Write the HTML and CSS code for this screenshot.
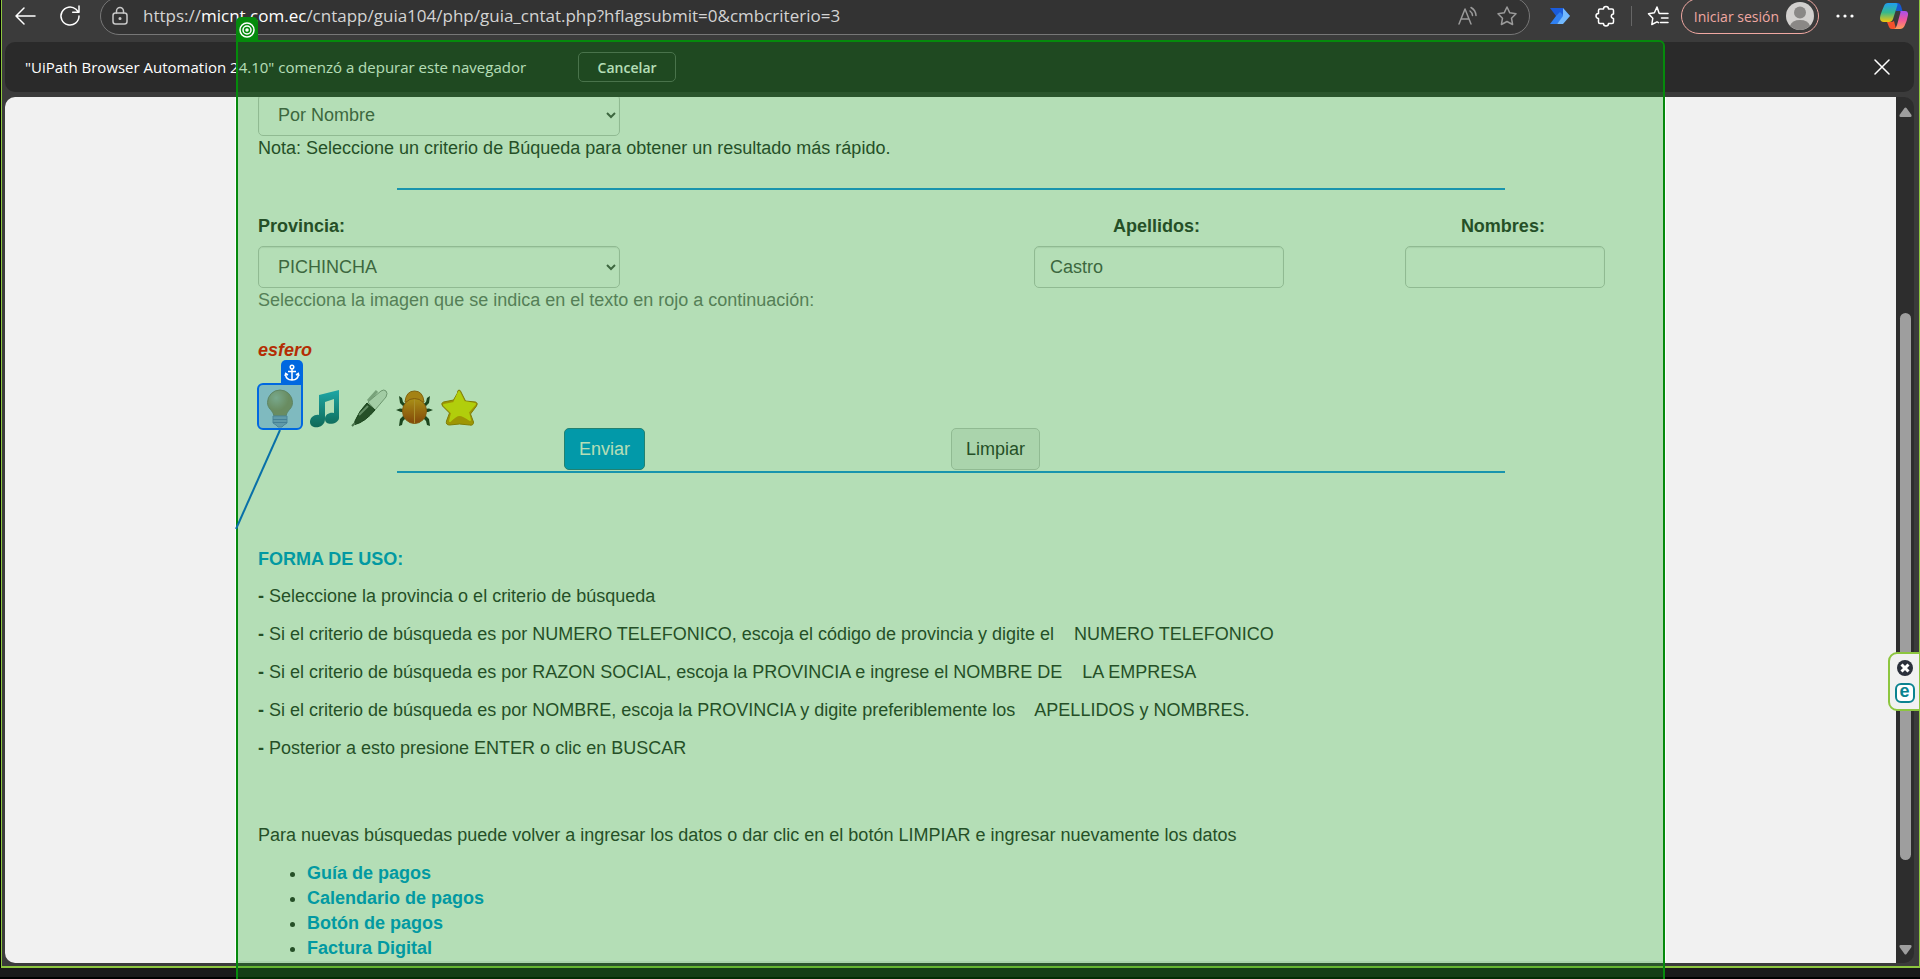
FILE: index.html
```html
<!DOCTYPE html>
<html lang="es">
<head>
<meta charset="utf-8">
<title>Guía telefónica</title>
<link rel="stylesheet" href="styles.css">
</head>
<body>
<div class="window">
  <header class="toolbar">
    <button class="icon-btn back" aria-label="Atrás"><svg width="22" height="22" viewBox="0 0 22 22"><path d="M21 11H2M10 3L2 11l8 8"/></svg></button>
    <button class="icon-btn reload" aria-label="Actualizar"><svg width="22" height="22" viewBox="0 0 22 22"><path d="M20 11a9 9 0 1 1-3-6.700L19.500 7M20 1v6.300h-6.300"/></svg></button>
    <div class="address">
      <svg class="dim" width="18" height="20" viewBox="0 0 18 20"><rect x="2" y="7" width="14" height="11" rx="2.500"/><path d="M5.500 7V5a3.500 3.500 0 0 1 7 0v2"/><circle cx="9" cy="12.500" r="0.800"/></svg>
      <span class="url">https://<b>micnt.com.ec</b>/cntapp/guia104/php/guia_cntat.php?hflagsubmit=0&amp;cmbcriterio=3</span>
      <svg class="faint" width="20" height="20" viewBox="0 0 20 20"><path d="M1 18L7 3l6 15M3 13h8M12 5a6 6 0 0 1 2.500 4.500M13 1.500a10 10 0 0 1 5 8"/></svg>
      <svg class="faint" width="22" height="22" viewBox="0 0 22 22"><path d="M11 2l2.800 5.800 6.200.9-4.500 4.500 1.100 6.300L11 16.500l-5.600 3 1.100-6.300L2 8.700l6.200-.9z"/></svg>
    </div>
    <svg class="plain" width="22" height="18" viewBox="0 0 22 18"><path fill="#1b5cdb" d="M1 1h13l7 8h-9L7 9z"/><path fill="#2f80f2" d="M7 9l4-4 4 4-7 8H1z"/><path fill="#72b9ff" d="M14 1l7 8-7 8H8l6-8z"/></svg>
    <svg class="puzzle" width="22" height="22" viewBox="0 0 22 22"><path d="M5 4h3.500a2.500 2.500 0 0 1 5 0H17q1.500 0 1.500 1.500V9a2.200 2.200 0 1 0 0 4.400V17q0 1.500-1.500 1.500h-3.500a2.500 2.500 0 0 1-5 0H5q-1.500 0-1.500-1.500v-3.500a2.500 2.500 0 0 1 0-5V5.500Q3.500 4 5 4z"/></svg>
    <span class="divider"></span>
    <svg width="22" height="22" viewBox="0 0 22 22"><path d="M12 8L10 2 7.400 7.800 1.500 8.700l4.300 4.500-1 6.300L10 16.800l1.500.8M12.500 8.500H21M14.500 13H21M13.500 17.500H21"/></svg>
    <button class="signin">Iniciar sesión
      <svg class="plain" width="28" height="28" viewBox="0 0 28 28"><circle cx="14" cy="14" r="14" fill="#d2d0ce"/><circle cx="14" cy="10.500" r="6" fill="#8a8886"/><path fill="#8a8886" d="M4 23.800Q6 18 14 18t10 5.800a14 14 0 0 1-20 0z"/></svg>
    </button>
    <svg class="plain dots" width="18" height="4" viewBox="0 0 18 4"><circle cx="2" cy="2" r="1.600"/><circle cx="9" cy="2" r="1.600"/><circle cx="16" cy="2" r="1.600"/></svg>
    <svg class="plain" width="28" height="26" viewBox="0 0 28 26">
      <defs>
        <linearGradient id="ca" x1="0" y1="0" x2="0" y2="1"><stop offset="0" stop-color="#1f9df0"/><stop offset=".5" stop-color="#37b98c"/><stop offset="1" stop-color="#f5c60a"/></linearGradient>
        <linearGradient id="cb" x1="0" y1="0" x2="0" y2="1"><stop offset="0" stop-color="#a650ee"/><stop offset=".5" stop-color="#f0569b"/><stop offset="1" stop-color="#ff9d58"/></linearGradient>
      </defs>
      <path fill="#1558d0" d="M14 0h4q2 0 3 3l1.500 5H16z"/>
      <path fill="url(#ca)" d="M8 0h8q2 0 1.500 2L13 16q-1 3-4 3H4q-4 0-4-4Q0 12 4 3 5 0 8 0z"/>
      <path fill="#f5512c" d="M7 19h5l2-1 2 8h-4q-2.500 0-3-2z"/>
      <path fill="url(#cb)" d="M20 8h5q3.500 0 3 4-1 6-3.500 11-1.500 3-4.500 3h-6q2-.5 3-4l3-11q1-3 0-3z"/>
    </svg>
  </header>

  <div class="infobar">
    <span>"UiPath Browser Automation 24.10" comenzó a depurar este navegador</span>
    <button class="cancel">Cancelar</button>
    <button class="icon-btn close" aria-label="Cerrar"><svg width="16" height="16" viewBox="0 0 16 16"><path d="M1 1l14 14M15 1L1 15"/></svg></button>
  </div>

  <div class="viewport">
    <main class="page">
      <form class="content">
        <select class="field wide criterion" aria-label="Criterio"><option>Por Nombre</option></select>
        <div>Nota: Seleccione un criterio de Búqueda para obtener un resultado más rápido.</div>
        <hr class="rule top">
        <div class="fields">
          <div class="cell">
            <label for="prov">Provincia:</label>
            <select class="field wide" id="prov"><option>PICHINCHA</option></select>
          </div>
          <div class="cell centered">
            <label for="ape">Apellidos:&nbsp;</label>
            <input class="field surname" id="ape" type="text" value="Castro">
          </div>
          <div class="cell centered">
            <label for="nom">Nombres:&nbsp;</label>
            <input class="field name" id="nom" type="text">
          </div>
        </div>
        <div class="hint">Selecciona la imagen que se indica en el texto en rojo a continuación:</div>
        <div class="word">esfero</div>
        <div class="captcha">
          <svg width="40" height="40" viewBox="0 0 40 40">
            <defs><radialGradient id="bulb" cx=".35" cy=".3"><stop offset="0" stop-color="#f0d890"/><stop offset="1" stop-color="#d09a30"/></radialGradient></defs>
            <path fill="url(#bulb)" stroke="#b48a38" d="M20 2a12.500 12.500 0 0 1 12.500 12.500C32.500 21 27 22 26 28H14c-1-6-6.500-7-6.500-13.500A12.500 12.500 0 0 1 20 2z"/>
            <path fill="#b9b9cc" stroke="#8d8da8" d="M13 28h14v7l-3 2-2 2h-4l-2-2-3-2z"/><path stroke="#8080a0" d="M13 31.500h14M13 34.500h14"/>
          </svg>
          <svg width="40" height="40" viewBox="0 0 40 40">
            <defs><linearGradient id="note" x1="0" y1="0" x2="0" y2="1"><stop offset="0" stop-color="#28b0e8"/><stop offset="1" stop-color="#145878"/></linearGradient></defs>
            <path fill="url(#note)" d="M14 7l20-5v28c0 6-14 9-14 1 0-5 5-7 9-6V11l-9 3v17c0 10-15 11-15 3 0-5 5-8 9-7z"/>
          </svg>
          <svg width="40" height="40" viewBox="0 0 40 40">
            <path d="M18 13L27 3" stroke="#aaa" stroke-width="3"/><path fill="#e6e6e6" stroke="#999" d="M18 14L31 3q3-2 5 0t0 6L25 22z"/>
            <path fill="#343434" stroke="#222" d="M17 15l8 7Q15 34 5 36.500 4 36 5 33 9 23 17 15z"/><path d="M9 27l9-9" stroke="#8a8a8a" stroke-width="2"/><path d="M5 35l-3 3" stroke="#666" stroke-width="2"/>
          </svg>
          <svg width="40" height="40" viewBox="0 0 40 40">
            <defs><linearGradient id="bug" x1="0" y1="0" x2="0" y2="1"><stop offset="0" stop-color="#f0901c"/><stop offset="1" stop-color="#b82808"/></linearGradient></defs>
            <path fill="#252525" d="M10 20L5 15 4 8l3 2 1 4 4 3zM10 21v3l-4 0-5-2 4-1.500zM10 26l2 3-4 4-1 4-3 1 1-7zM29 20l5-5 1-7-3 2-1 4-4 3zM29 21v3h4l5-2-4-1.500zM29 26l-2 3 4 4 1 4 3 1-1-7z"/>
            <path fill="#e87c18" stroke="#b85010" d="M10 14q1-11 9.500-11T29 14z"/><ellipse cx="19.500" cy="23" rx="12" ry="12.500" fill="url(#bug)" stroke="#b84410"/><path d="M19.500 12v23" stroke="#f0903c"/>
          </svg>
          <svg width="40" height="40" viewBox="0 0 40 40">
            <path fill="#e09800" stroke="#b47600" stroke-linejoin="round" d="M19 2q1.500 0 2.500 3l4 8 10 1q3 1 1 4l-6 8 3 8q0 4-4 3l-10-1-10 1q-4 0-3-4l3-8-7-7q-2-3 1-4l10-2 4-7q0-3 1.500-3z"/>
            <path fill="#fbe80c" stroke="#fbe80c" stroke-linejoin="round" stroke-width="2" d="M19 4l5 10 11 2-7 8 2 8q-7-5-10.500-5T10 33l2-8-8-8 10-2z"/>
          </svg>
        </div>
        <div class="actions">
          <div class="send"><button class="btn primary" type="submit">Enviar</button></div>
          <div><button class="btn" type="reset">Limpiar</button></div>
        </div>
        <hr class="rule">
        <section class="usage">
          <h2>FORMA DE USO:</h2>
          <p><b>-</b> Seleccione la provincia o el criterio de búsqueda</p>
          <p><b>-</b> Si el criterio de búsqueda es por NUMERO TELEFONICO, escoja el código de provincia y digite el &nbsp;&nbsp; NUMERO TELEFONICO</p>
          <p><b>-</b> Si el criterio de búsqueda es por RAZON SOCIAL, escoja la PROVINCIA e ingrese el NOMBRE DE &nbsp;&nbsp; LA EMPRESA</p>
          <p><b>-</b> Si el criterio de búsqueda es por NOMBRE, escoja la PROVINCIA y digite preferiblemente los &nbsp;&nbsp; APELLIDOS y NOMBRES.</p>
          <p><b>-</b> Posterior a esto presione ENTER o clic en BUSCAR</p>
        </section>
        <p class="again">Para nuevas búsquedas puede volver a ingresar los datos o dar clic en el botón LIMPIAR e ingresar nuevamente los datos</p>
        <ul class="links">
          <li><a href="#">Guía de pagos</a></li>
          <li><a href="#">Calendario de pagos</a></li>
          <li><a href="#">Botón de pagos</a></li>
          <li><a href="#">Factura Digital</a></li>
        </ul>
      </form>
    </main>
    <div class="scrollbar">
      <svg width="13" height="10" viewBox="0 0 13 10"><path fill="#9e9e9e" d="M5.500 1q1-1 2 0l5 7q.5 2-1 2h-10q-1.500 0-1-2z"/></svg>
      <div class="track"><div class="thumb"></div></div>
      <svg width="13" height="10" viewBox="0 0 13 10"><path fill="#9e9e9e" d="M5.500 9q1 1 2 0l5-7q.5-2-1-2h-10q-1.500 0-1 2z"/></svg>
    </div>
  </div>
</div>
<div class="desktop"></div>

<div class="target">
  <span class="target-tab"><svg width="16" height="16" viewBox="0 0 16 16"><circle cx="8" cy="8" r="7"/><circle cx="8" cy="8" r="4"/><circle cx="8" cy="8" r="1"/></svg></span>
</div>
<div class="anchor">
  <span class="anchor-tab"><svg width="16" height="18" viewBox="0 0 16 18"><circle cx="8" cy="3" r="1.800"/><path d="M8 5v11M4 7.500h8M1.500 9.500q0 6.500 6.500 6.500t6.500-6.500M1 12l.7-2.500L4 11M15 12l-.7-2.500L12 11"/></svg></span>
  <svg class="tether" width="46" height="100" viewBox="0 0 46 100"><path d="M45 0L1 99"/></svg>
</div>
<aside class="badge">
  <svg width="16" height="16" viewBox="0 0 16 16"><circle cx="8" cy="8" r="8" fill="#2b303b"/><path d="M4.500 4.500l7 7M11.500 4.500l-7 7" stroke="#fff" stroke-width="3"/></svg>
  <span class="eset">e</span>
</aside>
</body>
</html>
```
FILE: styles.css
```css
* { box-sizing: border-box; }
body {
  margin: 0;
  height: 100vh;
  overflow: hidden;
  position: relative;
  display: flex;
  flex-direction: column;
  background: #000;
  font-family: "Liberation Sans", Arial, sans-serif;
}
button { font: inherit; cursor: pointer; }
svg { flex: none; fill: none; }

.window {
  flex: 1;
  min-height: 0;
  display: flex;
  flex-direction: column;
  margin-left: 1px;
  padding: 0 5px 3px 3px;
  background: #3b3b3b;
  border: solid #8dc63f;
  border-width: 0 1px 2px;
}
.desktop { height: 11px; background: #1a1a1a; border-bottom: 2px solid #000; }

/* Browser chrome */
.toolbar, .infobar { font-family: "Open Sans", "Noto Sans", sans-serif; }
.toolbar {
  flex: none;
  display: flex;
  align-items: center;
  height: 32px;
  margin-bottom: 10px;
  padding: 0 6px 0 9px;
}
.toolbar svg:not(.plain), .close svg { stroke: #fff; stroke-width: 1.500; stroke-linecap: round; stroke-linejoin: round; }
.toolbar svg.dim { stroke: #c8c8c8; }
.toolbar svg.faint { stroke: #9a9a9a; }
.icon-btn { display: flex; padding: 0; border: 0; background: none; }
.reload { margin: 0 19px 0 23px; }
.address {
  flex: 1;
  min-width: 0;
  height: 38px;
  display: flex;
  align-items: center;
  gap: 18px;
  padding: 0 11px 0 10px;
  border: 1px solid #777;
  border-radius: 19px;
  background: #333;
  margin-right: 19px;
}
.url { flex: 1; font-size: 17px; line-height: 24px; color: #d4d4d4; white-space: nowrap; overflow: hidden; margin-left: -4px; }
.url b { font-weight: 400; color: #fff; }
.puzzle { margin-left: 24px; }
.divider { width: 1px; height: 20px; margin: 0 15px 0 14px; background: #666; }
.signin {
  display: flex;
  align-items: center;
  gap: 7px;
  height: 36px;
  margin: 0 17px 0 12px;
  padding: 0 4px 0 12px;
  border: 1px solid #f0a8a2;
  border-radius: 18px;
  background: none;
  color: #f0a8a2;
  font-size: 14px;
  white-space: nowrap;
}
.toolbar .dots { margin-right: 26px; fill: #fff; }
.infobar {
  flex: none;
  display: flex;
  align-items: center;
  height: 50px;
  margin-bottom: 5px;
  padding: 0 24px 0 20px;
  border-radius: 10px;
  background: #2a2a2a;
  color: #fff;
  font-size: 15px;
}
.cancel {
  width: 98px;
  height: 30px;
  margin-left: 52px;
  padding: 0;
  border: 1px solid #666;
  border-radius: 5px;
  background: none;
  color: #fff;
  font-size: 14px;
  font-weight: 600;
}
.close { margin-left: auto; }

/* Web page */
.viewport {
  flex: 1;
  min-height: 0;
  display: flex;
  overflow: hidden;
  border-radius: 10px;
  background: #2d2d2d;
}
.page { flex: 1; min-width: 0; padding: 0 230px; background: #f1f1f1; overflow: hidden; }
.content {
  min-height: 100%;
  margin-top: -3px;
  padding: 0 22px 0 23px;
  background: #fff;
  color: #333;
  font-size: 18px;
  line-height: 25px;
}
.field {
  display: block;
  height: 42px;
  padding: 7px 15px;
  border: 1px solid #ccc;
  border-radius: 5px;
  background: #fff;
  box-shadow: inset 0 1px 1px rgba(0, 0, 0, .08);
  color: #555;
  font: inherit;
}
.wide { width: 362px; }
.surname { width: 250px; }
.name { width: 200px; }
.rule { width: 80%; margin: 1px auto 0; border: 0; border-top: 2px solid #2196f3; }
.rule.top { margin: 27px auto 24px; }
.fields { display: grid; grid-template-columns: 50% 30% 20%; }
.fields label { display: block; margin-bottom: 7px; font-weight: 700; }
.centered { display: flex; flex-direction: column; align-items: center; }
.hint { color: #777; }
.word { margin: 25px 0; color: #f00; font-weight: 700; font-style: italic; }
.captcha { display: flex; gap: 5px; padding-left: 2px; }
.actions { display: grid; grid-template-columns: 1fr 1fr; }
.send { text-align: center; }
.btn {
  height: 42px;
  padding: 7px 14px;
  border: 1px solid #ccc;
  border-radius: 5px;
  background: #f1f1f1;
  color: #333;
  line-height: 25px;
}
.primary { background: #009cec; border-color: #2e7a9c; color: #fff; }
.usage { padding-top: 74px; }
h2, p { margin: 0 0 13px; font-size: 18px; }
h2 { margin-bottom: 12px; color: #009de3; }
.again { margin-top: 62px; }
.links { margin: 0; padding-left: 49px; }
.links a { color: #009de3; font-weight: 700; text-decoration: none; }

.scrollbar { width: 18px; display: flex; flex-direction: column; align-items: center; padding: 10px 0 8px; }
.track { flex: 1; width: 11px; margin: 4px 0; padding: 192px 0 81px; }
.thumb { height: 100%; border-radius: 6px; background: #9e9e9e; }

/* Selection highlights laid over the browser */
.target {
  position: absolute;
  inset: 40px 255px -10px 236px;
  border: 2px solid #058a0c;
  border-radius: 0 6px 0 0;
  background: rgba(8, 146, 12, .3);
  background-clip: padding-box;
  pointer-events: none;
}
.target-tab, .anchor-tab {
  position: absolute;
  bottom: 100%;
  width: 22px;
  height: 25px;
  display: flex;
  align-items: center;
  justify-content: center;
  border-radius: 5px 5px 0 0;
}
.target-tab { left: -2px; background: #058a0c; }
.target-tab svg, .anchor-tab svg { stroke: #fff; stroke-width: 1.500; }
.anchor {
  position: absolute;
  left: 257px;
  top: 383px;
  width: 46px;
  height: 47px;
  border: 2px solid #0068e0;
  border-radius: 6px 0 6px 6px;
  background: rgba(30, 120, 210, .35);
}
.anchor-tab { right: -2px; background: #0068e0; }
.tether { position: absolute; right: 20px; top: 45px; stroke: #0870a8; stroke-width: 2; }
.badge {
  position: absolute;
  right: 0;
  top: 652px;
  width: 32px;
  height: 59px;
  display: flex;
  flex-direction: column;
  align-items: center;
  justify-content: center;
  gap: 7px;
  border: 2px solid #8dc63f;
  border-right-width: 1px;
  border-radius: 9px 0 0 9px;
  background: #f1f1f1;
}
.eset {
  width: 20px;
  height: 20px;
  border: 2px solid #0b8390;
  border-radius: 6px;
  background: #fff;
  color: #0b8390;
  font-size: 18px;
  font-weight: 700;
  line-height: 13px;
  text-align: center;
}
```
